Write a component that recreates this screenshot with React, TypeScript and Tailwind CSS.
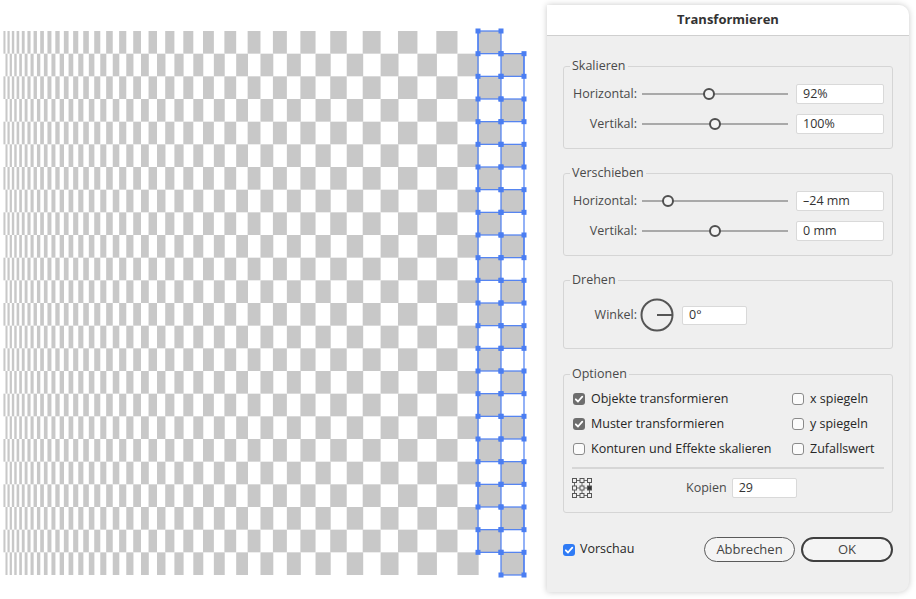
import React from "react";

const S = 0.92;
const FIX_X = -43;
const C0 = 501;
const TOP = 31;
const ROWS = 24;
const RH = 544 / 24;
const BLUE = "#4b7ef2";

function Artwork() {
  const rects: React.ReactNode[] = [];
  for (let k = 29; k >= 0; k--) {
    const f = Math.pow(S, k);
    const w = 46 * f;
    const c = FIX_X + (C0 - FIX_X) * f;
    for (let i = 0; i < ROWS; i++) {
      const x = i % 2 === 0 ? c - w / 2 : c;
      rects.push(
        <rect key={`${k}-${i}`} x={x} y={TOP + i * RH} width={w / 2} height={RH} fill="#c8c8c8" />,
      );
    }
  }

  // selection of the original column
  const sel: React.ReactNode[] = [];
  for (let i = 0; i < ROWS; i++) {
    const x = i % 2 === 0 ? 478 : 501;
    const y = TOP + i * RH;
    sel.push(
      <rect key={`o${i}`} x={x} y={y} width={23} height={RH} fill="none" stroke={BLUE} strokeWidth={1.2} />,
    );
    [
      [x, y],
      [x + 23, y],
      [x, y + RH],
      [x + 23, y + RH],
    ].forEach(([hx, hy], j) =>
      sel.push(<rect key={`h${i}-${j}`} x={hx - 2.5} y={hy - 2.5} width={5} height={5} fill={BLUE} />),
    );
  }

  return (
    <svg width={547} height={599} className="shrink-0">
      {rects}
      <line x1={478} y1={TOP} x2={478} y2={TOP + 23 * RH} stroke={BLUE} strokeWidth={1.2} />
      <line x1={524} y1={TOP + RH} x2={524} y2={TOP + 24 * RH} stroke={BLUE} strokeWidth={1.2} />
      {sel}
    </svg>
  );
}

function Tick({ size = 12 }: { size?: number }) {
  return (
    <svg width={size} height={size} viewBox="0 0 12 12">
      <path d="M2.8 6.3 L5 8.5 L9.3 3.6" fill="none" stroke="white" strokeWidth={1.8} strokeLinecap="round" strokeLinejoin="round" />
    </svg>
  );
}

function Check({ checked, label }: { checked?: boolean; label: string }) {
  return (
    <div className="flex h-5 items-center">
      {checked ? (
        <span className="ml-px flex size-3 items-center justify-center rounded-[3px] bg-[#6e6e6e]">
          <Tick />
        </span>
      ) : (
        <span className="ml-px size-3 rounded-[3px] border border-[#8a8a8a] bg-[#fbfbfb]" />
      )}
      <span className="ml-[6px] text-[12.5px] text-[#262626]">{label}</span>
    </div>
  );
}

function Field({ value, className }: { value: string; className: string }) {
  return (
    <div
      className={`flex items-center rounded-[2px] border border-[#d9d9d9] bg-white pl-[6px] text-[12.5px] text-[#333] ${className}`}
    >
      {value}
    </div>
  );
}

function SliderRow({ label, knob, value }: { label: string; knob: number; value: string }) {
  return (
    <div className="flex h-5 items-center">
      <span className="w-[65px] text-right text-[12.5px] whitespace-nowrap text-[#4a4a4a]">{label}</span>
      <div className="relative ml-[5px] h-3 w-[146px]">
        <div className="absolute top-[5px] right-0 left-0 h-[1.5px] bg-[#a9a9a9]" />
        <div
          className="absolute top-0 size-3 rounded-full border-2 border-[#505050] bg-[#f4f4f4]"
          style={{ left: knob - 6 }}
        />
      </div>
      <Field value={value} className="ml-[8px] h-5 w-[88px]" />
    </div>
  );
}

function Group({ title, className, children }: { title: string; className?: string; children: React.ReactNode }) {
  return (
    <fieldset className={`rounded-[3px] border border-[#d5d5d5] px-[8px] ${className ?? ""}`}>
      <legend className="-ml-[2px] px-[2px] text-[12.5px] leading-[16px] text-[#4a4a4a]">{title}</legend>
      {children}
    </fieldset>
  );
}

function GridIcon() {
  const pos = [0.5, 8, 15.5];
  return (
    <svg width={20} height={20} viewBox="0 0 20 20">
      {pos.map((y) => (
        <line key={`h${y}`} x1={2} y1={y + 2} x2={18} y2={y + 2} stroke="#666" strokeWidth={1} />
      ))}
      {pos.map((x) => (
        <line key={`v${x}`} x1={x + 2} y1={2} x2={x + 2} y2={18} stroke="#666" strokeWidth={1} />
      ))}
      {pos.map((y, r) =>
        pos.map((x, c) => (
          <rect
            key={`${r}${c}`}
            x={x}
            y={y}
            width={4}
            height={4}
            fill={r === 1 && c === 2 ? "#333" : "#efefef"}
            stroke="#555"
            strokeWidth={1}
          />
        )),
      )}
    </svg>
  );
}

export default function App() {
  return (
    <div className="flex h-[599px] w-[916px] overflow-hidden bg-white font-['Open_Sans',sans-serif]">
      <Artwork />
      <div className="mt-[5px] flex h-[587px] w-[362px] flex-col overflow-hidden rounded-r-[10px] bg-[#efefef] shadow-[0_0_6px_rgba(0,0,0,0.22)]">
        <div className="flex h-[31px] shrink-0 items-center justify-center border-b border-[#cfcfcf] bg-white text-[13px] font-bold text-[#333]">
          Transformieren
        </div>
        <div className="flex flex-col px-[16px] pt-[22px]">
          <Group title="Skalieren" className="pt-[10px] pb-[14px]">
            <div className="flex flex-col gap-[10px]">
              <SliderRow label="Horizontal:" knob={67} value="92%" />
              <SliderRow label="Vertikal:" knob={73} value="100%" />
            </div>
          </Group>

          <Group title="Verschieben" className="mt-[16px] pt-[10px] pb-[14px]">
            <div className="flex flex-col gap-[10px]">
              <SliderRow label="Horizontal:" knob={26} value="–24 mm" />
              <SliderRow label="Vertikal:" knob={73} value="0 mm" />
            </div>
          </Group>

          <Group title="Drehen" className="mt-[16px] pt-[10px] pb-[16px]">
            <div className="flex h-[34px] items-center">
              <span className="w-[65px] text-right text-[12.5px] text-[#4a4a4a]">Winkel:</span>
              <svg width={34} height={34} className="ml-[3px]">
                <circle cx={17} cy={17} r={15.5} fill="none" stroke="#555" strokeWidth={2} />
                <line x1={17} y1={17} x2={32.5} y2={17} stroke="#555" strokeWidth={2} />
              </svg>
              <Field value="0°" className="ml-[8px] h-[19px] w-[65px]" />
            </div>
          </Group>

          <Group title="Optionen" className="mt-[17px] pt-[7px] pb-[14px]">
            <div className="grid grid-cols-[219px_1fr] gap-y-[5px]">
              <Check checked label="Objekte transformieren" />
              <Check label="x spiegeln" />
              <Check checked label="Muster transformieren" />
              <Check label="y spiegeln" />
              <Check label="Konturen und Effekte skalieren" />
              <Check label="Zufallswert" />
            </div>
            <div className="mt-[8px] h-[2px] bg-[#d6d6d6]" />
            <div className="mt-[9px] flex h-5 items-center">
              <GridIcon />
              <span className="ml-[94px] text-[12.5px] text-[#4a4a4a]">Kopien</span>
              <Field value="29" className="ml-[5px] h-5 w-[65px]" />
            </div>
          </Group>

          <div className="mt-[24px] flex h-[25px] items-center">
            <span className="flex size-3 items-center justify-center rounded-[3px] bg-[#2f7bf5]">
              <Tick />
            </span>
            <span className="ml-[5px] text-[12.5px] text-[#262626]">Vorschau</span>
            <div className="ml-auto flex gap-[6px]">
              <button className="h-[25px] w-[91px] rounded-full border border-[#5a5a5a] bg-[#f4f4f4] text-[13px] text-[#444]">
                Abbrechen
              </button>
              <button className="h-[25px] w-[92px] rounded-full border-2 border-[#3f3f3f] bg-[#f4f4f4] text-[13px] text-[#444]">
                OK
              </button>
            </div>
          </div>
        </div>
      </div>
    </div>
  );
}
